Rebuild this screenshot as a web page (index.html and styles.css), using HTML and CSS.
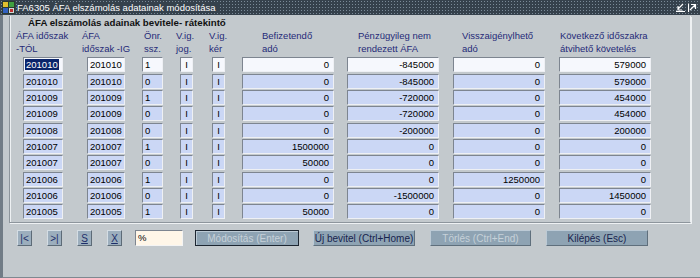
FILE: index.html
```html
<!DOCTYPE html>
<html lang="hu">
<head>
    <meta charset="UTF-8">
    <title>FA6305 ÁFA elszámolás adatainak módosítása</title>
    <link rel="stylesheet" href="styles.css">
</head>
<body>
    <div class="window">
        <div class="titlebar">
            <span class="app-icon">
                <svg width="13" height="13" viewBox="0 0 13 13">
                    <rect x="0" y="0" width="13" height="13" fill="#2c3a30"/>
                    <rect x="1" y="1" width="5" height="5" fill="#e0c030"/>
                    <rect x="7" y="1" width="5" height="5" fill="#40a040"/>
                    <rect x="1" y="7" width="5" height="5" fill="#3060c0"/>
                    <rect x="7" y="7" width="5" height="5" fill="#d0d8d8"/>
                    <rect x="8" y="8" width="3" height="3" fill="#c03030"/>
                </svg>
            </span>
            <span class="title-text">FA6305 ÁFA elszámolás adatainak módosítása</span>
            <span class="title-buttons">
                <svg width="9" height="9" viewBox="0 0 9 9">
                    <path d="M7 1 L2 6 M2 3 V7 H6 M0 8.5 H9" stroke="#fff" stroke-width="1.2" fill="none"/>
                </svg>
                <svg width="9" height="9" viewBox="0 0 9 9">
                    <path d="M2 7 L7 2 M3 1.5 H7.5 V6 M0.5 0.5 V9" stroke="#fff" stroke-width="1.2" fill="none"/>
                </svg>
            </span>
        </div>
        <div class="client">
            <div class="group">
                <div class="group-title">ÁFA elszámolás adainak bevitele- rátekintő</div>
                <div class="grid">
                    <div class="head h1">ÁFA időszak<br>-TÓL</div>
                    <div class="head h2">ÁFA<br>időszak -IG</div>
                    <div class="head h3">Önr.<br>ssz.</div>
                    <div class="head h4">V.ig.<br>jog.</div>
                    <div class="head h5">V.ig.<br>kér</div>
                    <div class="head h6">Befizetendő<br>adó</div>
                    <div class="head h7">Pénzügyileg nem<br>rendezett ÁFA</div>
                    <div class="head h8">Visszaigénylhető<br>adó</div>
                    <div class="head h9">Következő időszakra<br>átvihető követelés</div>

                    <div class="cell w-per current"><span class="selected">201010</span></div>
                    <div class="cell w-per2 current">201010</div>
                    <div class="cell w-ssz current">1</div>
                    <div class="cell w-flag current">I</div>
                    <div class="cell w-flag current">I</div>
                    <div class="cell w-num current">0</div>
                    <div class="cell w-num current">-845000</div>
                    <div class="cell w-num current">0</div>
                    <div class="cell w-num current">579000</div>

                    <div class="cell w-per">201010</div>
                    <div class="cell w-per2">201010</div>
                    <div class="cell w-ssz">0</div>
                    <div class="cell w-flag">I</div>
                    <div class="cell w-flag">I</div>
                    <div class="cell w-num">0</div>
                    <div class="cell w-num">-845000</div>
                    <div class="cell w-num">0</div>
                    <div class="cell w-num">579000</div>

                    <div class="cell w-per">201009</div>
                    <div class="cell w-per2">201009</div>
                    <div class="cell w-ssz">1</div>
                    <div class="cell w-flag">I</div>
                    <div class="cell w-flag">I</div>
                    <div class="cell w-num">0</div>
                    <div class="cell w-num">-720000</div>
                    <div class="cell w-num">0</div>
                    <div class="cell w-num">454000</div>

                    <div class="cell w-per">201009</div>
                    <div class="cell w-per2">201009</div>
                    <div class="cell w-ssz">0</div>
                    <div class="cell w-flag">I</div>
                    <div class="cell w-flag">I</div>
                    <div class="cell w-num">0</div>
                    <div class="cell w-num">-720000</div>
                    <div class="cell w-num">0</div>
                    <div class="cell w-num">454000</div>

                    <div class="cell w-per">201008</div>
                    <div class="cell w-per2">201008</div>
                    <div class="cell w-ssz">0</div>
                    <div class="cell w-flag">I</div>
                    <div class="cell w-flag">I</div>
                    <div class="cell w-num">0</div>
                    <div class="cell w-num">-200000</div>
                    <div class="cell w-num">0</div>
                    <div class="cell w-num">200000</div>

                    <div class="cell w-per">201007</div>
                    <div class="cell w-per2">201007</div>
                    <div class="cell w-ssz">1</div>
                    <div class="cell w-flag">I</div>
                    <div class="cell w-flag">I</div>
                    <div class="cell w-num">1500000</div>
                    <div class="cell w-num">0</div>
                    <div class="cell w-num">0</div>
                    <div class="cell w-num">0</div>

                    <div class="cell w-per">201007</div>
                    <div class="cell w-per2">201007</div>
                    <div class="cell w-ssz">0</div>
                    <div class="cell w-flag">I</div>
                    <div class="cell w-flag">I</div>
                    <div class="cell w-num">50000</div>
                    <div class="cell w-num">0</div>
                    <div class="cell w-num">0</div>
                    <div class="cell w-num">0</div>

                    <div class="cell w-per">201006</div>
                    <div class="cell w-per2">201006</div>
                    <div class="cell w-ssz">1</div>
                    <div class="cell w-flag">I</div>
                    <div class="cell w-flag">I</div>
                    <div class="cell w-num">0</div>
                    <div class="cell w-num">0</div>
                    <div class="cell w-num">1250000</div>
                    <div class="cell w-num">0</div>

                    <div class="cell w-per">201006</div>
                    <div class="cell w-per2">201006</div>
                    <div class="cell w-ssz">0</div>
                    <div class="cell w-flag">I</div>
                    <div class="cell w-flag">I</div>
                    <div class="cell w-num">0</div>
                    <div class="cell w-num">-1500000</div>
                    <div class="cell w-num">0</div>
                    <div class="cell w-num">1450000</div>

                    <div class="cell w-per">201005</div>
                    <div class="cell w-per2">201005</div>
                    <div class="cell w-ssz">1</div>
                    <div class="cell w-flag">I</div>
                    <div class="cell w-flag">I</div>
                    <div class="cell w-num">50000</div>
                    <div class="cell w-num">0</div>
                    <div class="cell w-num">0</div>
                    <div class="cell w-num">0</div>
                </div>
            </div>
            <div class="toolbar">
                <button class="nav-btn">|&lt;</button>
                <button class="nav-btn">&gt;|</button>
                <button class="nav-btn"><u>S</u></button>
                <button class="nav-btn"><u>X</u></button>
                <div class="filter">%</div>
                <button class="btn btn-default" disabled>Módosítás (Enter)</button>
                <button class="btn btn-new">Új bevitel (Ctrl+Home)</button>
                <button class="btn btn-del" disabled>Törlés (Ctrl+End)</button>
                <button class="btn btn-exit">Kilépés (Esc)</button>
            </div>
        </div>
    </div>
</body>
</html>
```
FILE: styles.css
```css
body {
    margin: 0;
    background-color: #c3c9cd;
    font-family: 'Liberation Sans', Arial, sans-serif;
    font-size: 9.5px;
}
.window {
    width: 700px;
    height: 278px;
    background-color: #c3c9cd;
    overflow: hidden;
}
.titlebar {
    height: 15px;
    display: flex;
    align-items: center;
    background-color: #35414c;
    background-image: radial-gradient(circle, #7a8a98 0.6px, transparent 0.9px);
    background-size: 3px 3px;
    color: #fff;
    font-size: 9.5px;
}
.app-icon {
    display: flex;
    margin: 0 2px 0 2px;
}
.title-text {
    flex: 0 0 auto;
    background-color: #35414c;
    padding-right: 4px;
}
.title-buttons {
    margin-left: auto;
    display: flex;
    gap: 3px;
    padding-right: 3px;
}
.client {
    height: 261px;
    border-left: 3px solid #717c86;
    border-bottom: 2px solid #7e8890;
    padding: 1px 0 0 6px;
}
.group {
    width: 680px;
    height: 206px;
    border-left: 1px solid #8d959c;
    border-right: 1px solid #eef1f3;
    border-bottom: 1px solid #8d959c;
    box-shadow: 1px 1px 0 #eef1f3, inset 1px 0 0 #eef1f3;
}
.group-title {
    margin-left: 18px;
    font-size: 9.7px;
    font-weight: bold;
    color: #111;
    line-height: 12px;
    padding-top: 1px;
}
.grid {
    display: grid;
    grid-template-columns: 64px 55px 38px 32px 30px 105px 106px 106px 92px;
    grid-template-rows: 27px;
    grid-auto-rows: 15px;
    row-gap: 1.33px;
    margin-left: 13px;
}
.head {
    color: #252a78;
    line-height: 13px;
    white-space: nowrap;
}
.h1 { margin-left: -7px; }
.h2 { margin-left: -5px; }
.h3 { margin-left: 2px; }
.h4 { margin-left: -4px; }
.h5 { margin-left: -3px; }
.h6 { margin-left: 20px; }
.h7 { margin-left: 11px; }
.h8 { margin-left: 9px; }
.h9 { margin-left: 1px; }
.cell {
    box-sizing: border-box;
    height: 15px;
    line-height: 13px;
    padding: 0 2px;
    background-color: #cbd7f5;
    border-top: 1px solid #7d8590;
    border-left: 1px solid #7d8590;
    border-right: 1px solid #eef0f4;
    border-bottom: 1px solid #eef0f4;
    color: #000;
    white-space: nowrap;
    overflow: hidden;
}
.cell.current {
    background-color: #f6f8fd;
}
.w-per { width: 40px; }
.w-per2 { width: 38px; }
.w-ssz { width: 21px; }
.w-flag {
    width: 13px;
    text-align: center;
    padding: 0;
}
.w-num {
    width: 92px;
    text-align: right;
    padding-right: 4px;
}
.selected {
    background-color: #0a246a;
    color: #fff;
    padding: 0 1px;
    margin-left: -1px;
}
.toolbar {
    display: flex;
    align-items: center;
    margin-top: 7px;
    padding-left: 8px;
    height: 16px;
}
.nav-btn {
    width: 15px;
    height: 16px;
    padding: 0;
    margin-right: 15px;
    font-family: inherit;
    font-size: 10px;
    color: #1e2e6a;
    background-color: #9caebd;
    border: 1px solid;
    border-color: #d4dde4 #5d6b77 #5d6b77 #d4dde4;
}
.nav-btn:nth-child(4) {
    margin-right: 13px;
}
.filter {
    box-sizing: border-box;
    width: 48px;
    height: 16px;
    background-color: #fff6e8;
    border-top: 1px solid #7d8590;
    border-left: 1px solid #7d8590;
    border-right: 1px solid #f4f4f4;
    border-bottom: 1px solid #f4f4f4;
    padding-left: 2px;
    line-height: 14px;
    margin-right: 12px;
}
.btn {
    box-sizing: border-box;
    height: 16px;
    padding: 0;
    font-family: inherit;
    font-size: 10px;
    color: #18244e;
    background-color: #8ea3b3;
    border: 1px solid;
    border-color: #bccad5 #5f6f7c #5f6f7c #bccad5;
}
.btn:disabled {
    color: #c6d1d9;
}
.btn-default {
    width: 104px;
    margin-right: 14px;
    border: 1px solid #1d2631;
    box-shadow: inset 1px 1px 0 #bccad5;
}
.btn-new {
    width: 102px;
    margin-right: 15px;
}
.btn-del {
    width: 101px;
    margin-right: 15px;
}
.btn-exit {
    width: 102px;
}
```
